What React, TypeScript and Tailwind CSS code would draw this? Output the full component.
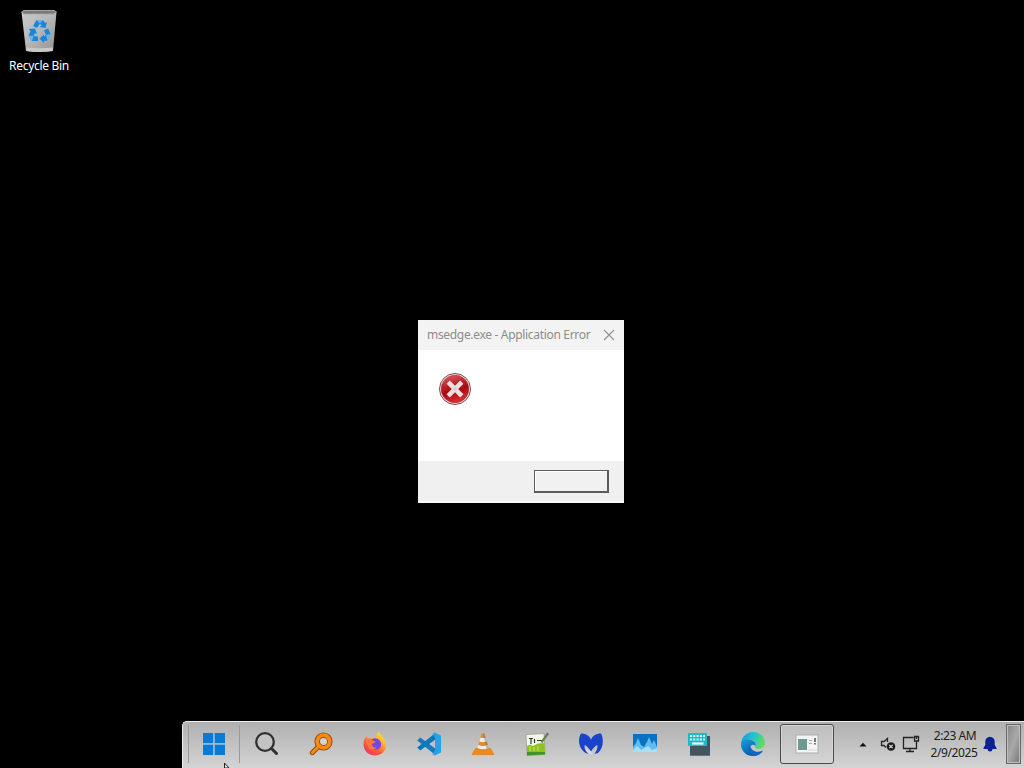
import type { ReactNode } from "react"

function RecycleBinIcon() {
  return (
    <svg width="38" height="44" viewBox="0 0 38 44">
      <defs>
        <linearGradient id="bin" x1="0" y1="0" x2="1" y2="1">
          <stop offset="0" stopColor="#c9cbcc" />
          <stop offset="0.5" stopColor="#b4b6b8" />
          <stop offset="1" stopColor="#8f9193" />
        </linearGradient>
      </defs>
      <path d="M1.5 3 L36.500 3 L33 42 Q19 44 6 42 Z" fill="url(#bin)" />
      <path d="M1.500 3 L4 1.500 H34 L36.500 3 L34 5 H4 Z" fill="#77797b" stroke="#a4a6a7" strokeWidth="1" />
      <path d="M6 38.500 Q19 40 33 38.500 L32.700 42 Q19 44 6.300 42 Z" fill="#c9c9c7" />
      <g fill="#1687dc">
        <path d="M13 17 L16.500 11 H23 L25 14 L27 13 L25.500 19 L19.500 18 L21.500 16.500 L20 14.500 L17 19 Z" />
        <path d="M9 20 L15 19.500 L17 25 L15 24.300 L13.500 27 L18 27.500 V32 H12 L8.500 26.500 L10.500 22.500 Z" />
        <path d="M24 21.500 L28 19.500 L30.500 25 L27.500 31.500 L24 32 V34 L19.500 29.500 L24 25.500 V27.500 L26 26 Z" />
      </g>
      <path d="M16.500 11 H23 L20 14.500 Z M8.500 26.500 L13.500 27 L12 32 Z M26 26 L30.500 25 L27.500 31.500 Z" fill="#65b7ee" />
    </svg>
  )
}

function ErrorIcon() {
  return (
    <svg width="34" height="34" viewBox="0 0 34 34">
      <defs>
        <linearGradient id="err" x1="0" y1="0" x2="0.300" y2="1">
          <stop offset="0" stopColor="#d8686c" />
          <stop offset="0.450" stopColor="#bd1c26" />
          <stop offset="0.650" stopColor="#a90713" />
          <stop offset="1" stopColor="#d22b30" />
        </linearGradient>
      </defs>
      <circle cx="17" cy="17" r="15.500" fill="#f3e4e2" stroke="#85474a" strokeWidth="1" />
      <circle cx="17" cy="17" r="13.800" fill="url(#err)" stroke="#a52630" strokeWidth="0.600" />
      <path d="M10.200 10.200 L23.800 23.800 M23.800 10.200 L10.200 23.800" stroke="#f0dfdb" strokeWidth="4.600" />
      <path d="M14.500 17 L17 14.500 L19.500 17 L17 19.500 Z" fill="#c6d4d5" />
    </svg>
  )
}

function StartIcon() {
  return (
    <svg width="24" height="24" viewBox="0 0 24 24">
      <path d="M1 1 H11.300 V11.300 H1 Z M12.500 1 H23 V11.300 H12.500 Z M1 12.500 H11.300 V23 H1 Z M12.500 12.500 H23 V23 H12.500 Z" fill="#087bd6" />
      <path d="M11.900 1 V23 M1 11.900 H23" stroke="#8fc0e3" strokeWidth="1.200" />
    </svg>
  )
}

function SearchIcon() {
  return (
    <svg width="26" height="26" viewBox="0 0 26 26">
      <circle cx="11" cy="11" r="8.800" fill="#c3c3c3" stroke="#303030" strokeWidth="2.300" />
      <path d="M17.500 17.500 L22.500 22.500" stroke="#303030" strokeWidth="3" strokeLinecap="round" />
    </svg>
  )
}

function EverythingIcon() {
  return (
    <svg width="24" height="24" viewBox="0 0 24 24">
      <path d="M10.500 13.500 L3.300 20.700" stroke="#8d4c13" strokeWidth="5" strokeLinecap="round" />
      <circle cx="14.500" cy="9.500" r="6.300" fill="none" stroke="#8d4c13" strokeWidth="5.600" />
      <path d="M10.500 13.500 L3.300 20.700" stroke="#f68912" strokeWidth="3" strokeLinecap="round" />
      <circle cx="14.500" cy="9.500" r="6.300" fill="none" stroke="#f68912" strokeWidth="3.800" />
      <circle cx="14.500" cy="9.500" r="3.300" fill="#d4d1d6" />
    </svg>
  )
}

function FirefoxIcon() {
  return (
    <svg width="26" height="26" viewBox="0 0 26 26">
      <defs>
        <linearGradient id="fox" x1="0.900" y1="0" x2="0.200" y2="1">
          <stop offset="0" stopColor="#ffe64a" />
          <stop offset="0.350" stopColor="#ffb52c" />
          <stop offset="0.650" stopColor="#fa6038" />
          <stop offset="1" stopColor="#ee3165" />
        </linearGradient>
      </defs>
      <path d="M4.500 5 C5 7 6 7.500 7.500 7.500 C10 6 12.500 7 13.500 8 C13.500 5 15 2 17.500 1 C17.500 4 23 6 24 12 C25 19 20 24.500 13 24.500 C6 24.500 1.500 19.500 1.500 13 C1.500 9.500 3 6.500 4.500 5 Z" fill="url(#fox)" />
      <path d="M9 9 Q12 6 16 8 Q20 10.500 19 15 Q17.500 19 13 18.700 Q8.500 18 8.300 14 Z" fill="#7547dd" />
      <path d="M3 9 Q7 6.500 10 9 L13.500 10.500 Q13 12.500 9.700 13 Q10.500 16.800 14.500 16.700 Q12 20.500 7 17.500 Z" fill="#ff743c" />
    </svg>
  )
}

function CodeIcon() {
  return (
    <svg width="26" height="26" viewBox="0 0 26 26">
      <path d="M1.200 9.500 L4.200 6.500 L20 18 V24.500 Z" fill="#137bbd" />
      <path d="M1.200 16.500 L4.200 19.500 L20 8 V1.500 Z" fill="#0878bd" />
      <path d="M18.500 1.500 L25 4.500 V21.500 L18.500 24.500 L16.500 23 L19 19.500 V6.500 L16.500 3 Z" fill="#27a1ec" />
    </svg>
  )
}

function ConeIcon() {
  return (
    <svg width="24" height="24" viewBox="0 0 24 24">
      <path d="M4.500 16.500 H19.500 L23 22.500 H1 Z" fill="#f28b13" stroke="#d77005" strokeWidth="0.500" />
      <path d="M10.700 1.500 Q12 0.500 13.300 1.500 L18.500 18.500 Q12 21.500 5.500 18.500 Z" fill="#e38a26" />
      <path d="M9.500 5.500 Q12 6.500 14.500 5.500 L15.700 9.500 Q12 11 8.300 9.500 Z M7.200 13 Q12 15 16.800 13 L17.700 16 Q12 18.500 6.300 16 Z" fill="#ededeb" />
      <path d="M13.300 1.500 L17.700 16 L15.500 16.800 L12 1.500 Z" fill="#6b6561" opacity="0.400" />
    </svg>
  )
}

function ChartPadIcon() {
  return (
    <svg width="26" height="26" viewBox="0 0 26 26">
      <path d="M2 3.500 L20 2.500 L21 23.500 L3 24.500 Z" fill="#f2f6e8" stroke="#8b9982" strokeWidth="0.700" />
      <path d="M3 15 L6 13.500 L9 15 L14 12.500 L20.600 12 L21 23 L3 24 Z" fill="#8cc31d" />
      <path d="M3 21 H21 V23.500 L3 24.500 Z" fill="#3e932b" />
      <path d="M5 7.500 H9 M7 7 V13 M10.500 8 V12 M13 9.500 H18" stroke="#303730" strokeWidth="1.200" />
      <path d="M6 15 V20 M10 16 V20 M14 15 V20" stroke="#d3e36f" strokeWidth="1" />
      <path d="M16.500 11 L22 3 L24 4.500 L18.500 12 Z" fill="#70824b" />
      <path d="M22 3 L23 1.500 L25 3 L24 4.500 Z" fill="#75635e" />
    </svg>
  )
}

function MalwareIcon() {
  return (
    <svg width="26" height="24" viewBox="0 0 26 24">
      <path d="M3 1.500 C8 1.500 12 4 13 8 C14 4 18 1.500 23 1.500 C26 7 25.500 16 20 21 L16.500 22 C19 18 20 15.500 19.200 13 C17 14 15 16.500 13 19.500 C11 16.500 9 14 6.800 13 C6 15.500 7 18.500 10.500 22 C2 20 -1.500 9 3 1.500 Z" fill="#1a42cb" />
      <path d="M6.800 14 Q8 19 11 22 L15 22.500 L13 19.500 L9 17 Z" fill="#d8d9df" />
    </svg>
  )
}

function MonitorGraphIcon() {
  return (
    <svg width="26" height="22" viewBox="0 0 26 22">
      <path d="M1 1 H25 V19 H1 Z" fill="#0871c3" />
      <path d="M1 14 L4 10 L6 5 L9 12 L12 14 L15 9 L17 4 L20 11 L22 7 L25 14 V19 H1 Z" fill="#62bdec" />
      <path d="M1 17 L5 13 L9 17 L16 13 L20 17 L25 15 V19 H1 Z" fill="#a9dff3" />
    </svg>
  )
}

function KeyboardIcon() {
  return (
    <svg width="26" height="26" viewBox="0 0 26 26">
      <path d="M4 5 H24 V24.500 H4 Z" fill="#4b5b69" />
      <path d="M4 16 L20 5 H24 V24.500 H4 Z" fill="#455461" />
      <rect x="2" y="2" width="19" height="13" rx="1" fill="#1cbaca" />
      <path d="M4 5 H19 M4 8.500 H19" stroke="#edfafa" strokeWidth="2" strokeDasharray="2 1.300" />
      <path d="M6 12.500 H17.500" stroke="#edfafa" strokeWidth="2.200" />
    </svg>
  )
}

function EdgeIcon() {
  return (
    <svg width="26" height="26" viewBox="0 0 26 26">
      <defs>
        <linearGradient id="edgeTop" x1="0" y1="0.200" x2="1" y2="0.500">
          <stop offset="0" stopColor="#159ce1" />
          <stop offset="0.550" stopColor="#27c6c8" />
          <stop offset="1" stopColor="#69dd58" />
        </linearGradient>
        <linearGradient id="edgeBase" x1="0" y1="0" x2="0.600" y2="1">
          <stop offset="0" stopColor="#169fdf" />
          <stop offset="1" stopColor="#0755a9" />
        </linearGradient>
      </defs>
      <path d="M1 12.500 C2 5 7 1 13 1 C20 1 25 6 25 11.500 C25 15.500 22 18 18.500 18 C15.500 18 14.500 16.500 15.500 15 C17 12.500 15 9 10.500 8.500 C6 8 2.500 10 1 12.500 Z" fill="url(#edgeTop)" />
      <path d="M1 12.500 C3 8 7 7.500 11 8.700 C15 10 16.500 12.500 15.500 15 C14 13 10.500 13.500 10 16.500 C10 22 17 23.500 23 19.500 C20 23.500 16.500 25 13 25 C5 25 0.500 18.500 1 12.500 Z" fill="url(#edgeBase)" />
      <path d="M10 13.500 C7.500 17 9 23 14 25 C18 25 21.500 22.500 23 19.500 C16.500 23 10 19 10 13.500 Z" fill="#1465bc" />
    </svg>
  )
}

function DialogAppIcon() {
  return (
    <svg width="24" height="20" viewBox="0 0 24 20">
      <rect x="1" y="1" width="22" height="18" fill="#f3f5f4" stroke="#acb0b0" />
      <rect x="3" y="5" width="9" height="11" fill="#699b91" />
      <path d="M14 6.500 H17 M14 9.500 H17" stroke="#aaa" />
      <path d="M20 4 V8 M20 9 V10.500" stroke="#465454" strokeWidth="1.500" />
      <path d="M13 16 H22" stroke="#d3d8d5" />
    </svg>
  )
}

function MutedIcon() {
  return (
    <svg width="16" height="16" viewBox="0 0 16 16" fill="none">
      <path d="M6 11.500 L4 9.500 H1.500 V5.500 H4 L7.500 2.500 V6" stroke="#242424" strokeWidth="1.300" />
      <circle cx="11" cy="10.500" r="4.300" fill="#1c1c1c" />
      <path d="M9.300 8.800 L12.700 12.200 M12.700 8.800 L9.300 12.200" stroke="#e2e2e2" strokeWidth="1.200" />
    </svg>
  )
}

function NetworkIcon() {
  return (
    <svg width="18" height="18" viewBox="0 0 18 18" fill="none" stroke="#222" strokeWidth="1.300">
      <path d="M11.500 2.500 H1.500 V13.500 H14.500 V8 M8 13.500 V16.500 M4 16.500 H12" />
      <path d="M12.500 1.500 H16.500 V6 H12.500 Z M14.500 1.500 V4 M14.500 6 V9" />
    </svg>
  )
}

function BellIcon() {
  return (
    <svg width="14" height="16" viewBox="0 0 14 16" fill="#0c2290">
      <path d="M7 0.800 C9.800 1 11.700 3 11.700 5.500 V9 L13.500 12 V13 H0.500 V12 L2.300 9 V5.500 C2.300 3 4.200 1 7 0.800 Z M4.500 13 H9.500 Q9.300 15.500 7 15.500 Q4.700 15.500 4.500 13 Z" />
    </svg>
  )
}

const pinnedApps: { name: string; icon: ReactNode }[] = [
  { name: "Search", icon: <SearchIcon /> },
  { name: "Everything", icon: <EverythingIcon /> },
  { name: "Firefox", icon: <FirefoxIcon /> },
  { name: "Visual Studio Code", icon: <CodeIcon /> },
  { name: "VLC", icon: <ConeIcon /> },
  { name: "Notepad++", icon: <ChartPadIcon /> },
  { name: "Malwarebytes", icon: <MalwareIcon /> },
  { name: "Task Manager", icon: <MonitorGraphIcon /> },
  { name: "Keyboard", icon: <KeyboardIcon /> },
  { name: "Microsoft Edge", icon: <EdgeIcon /> },
]

function ErrorDialog() {
  return (
    <div className="absolute left-[418px] top-[320px] flex h-[183px] w-[206px] flex-col bg-white">
      <div className="flex h-[30px] shrink-0 items-center justify-between bg-[#f3f3f3] pl-[9px] pr-[9px]">
        <span className="whitespace-nowrap text-[12px] leading-4 tracking-[-0.32px] text-[#8c8c8c]">msedge.exe - Application Error</span>
        <svg className="mb-px shrink-0" width="12" height="12" viewBox="0 0 12 12">
          <path d="M1 1 L11 11 M11 1 L1 11" stroke="#939393" strokeWidth="1.200" />
        </svg>
      </div>
      <div className="flex-1 pl-5 pt-[22px]">
        <ErrorIcon />
      </div>
      <div className="flex h-[42px] shrink-0 items-start justify-end border-b-2 border-[#f8f8f8] bg-[#f0f0f0] pr-[15px] pt-[9px]">
        <button className="h-[23px] w-[75px] border border-b-2 border-r-2 border-[#5c5c5c] bg-[#f1f1f1] shadow-[inset_1px_1px_0_#fff]"></button>
      </div>
    </div>
  )
}

function Taskbar() {
  return (
    <div className="ml-[182px] flex h-[47px] shrink-0 items-stretch rounded-tl-[5px] border-l border-t border-[#ededed] bg-linear-to-b from-[#b0b0b0] to-[#d4d4d4] pl-[5px]">
      <button className="mb-[5px] mt-[3px] flex w-[52px] items-center justify-center border-l border-r border-l-[#999] border-r-[#999]">
        <StartIcon />
      </button>
      {pinnedApps.map((app) => (
        <button key={app.name} aria-label={app.name} className="flex w-[54px] items-center justify-center pb-[2px] pr-px">
          {app.icon}
        </button>
      ))}
      <button className="mt-[2px] flex h-[40px] w-[54px] items-center justify-center rounded-[3px] border border-[#4a4a4a] bg-linear-to-b from-[#bdbdbd] to-[#d5d5d5] pr-px shadow-[inset_0_0_0_1px_#d7d7d7]">
        <DialogAppIcon />
      </button>
      <div className="ml-auto flex items-center pb-[2px]">
        <svg className="mr-[13px]" width="8" height="5" viewBox="0 0 8 5">
          <path d="M0.500 4.500 L4 0.800 L7.500 4.500 Z" fill="#111" />
        </svg>
        <MutedIcon />
        <div className="ml-[6px]">
          <NetworkIcon />
        </div>
        <div className="ml-[8px] w-[52px] whitespace-nowrap text-center text-[12px] leading-[17px] tracking-[-0.42px] text-[#202020]">
          <div className="pl-[2px]">2:23 AM</div>
          <div>2/9/2025</div>
        </div>
        <div className="ml-[3px] mr-[9px]">
          <BellIcon />
        </div>
        <div className="mr-[3px] h-[40px] w-[15px] border border-[#686868] bg-linear-to-br from-[#858585] via-[#a9a9a9] to-[#777777] shadow-[inset_0_0_0_1px_#bebebe]"></div>
      </div>
    </div>
  )
}

export default function App() {
  return (
    <div className="relative flex h-[768px] w-[1024px] flex-col justify-between overflow-hidden bg-black font-['Noto_Sans','Open_Sans',sans-serif]">
      <div className="flex w-[78px] flex-col items-center pt-[9px]">
        <RecycleBinIcon />
        <span className="mt-[5px] whitespace-nowrap text-[12px] leading-4 tracking-[-0.3px] text-white">Recycle Bin</span>
      </div>
      <ErrorDialog />
      <Taskbar />
      {/* mouse pointer at the bottom edge */}
      <svg className="absolute left-[224px] top-[763px]" width="6" height="5" viewBox="0 0 6 5">
        <path d="M0.500 0 V5 H5 Z" fill="#eee" stroke="#222" strokeWidth="1" />
      </svg>
    </div>
  )
}
